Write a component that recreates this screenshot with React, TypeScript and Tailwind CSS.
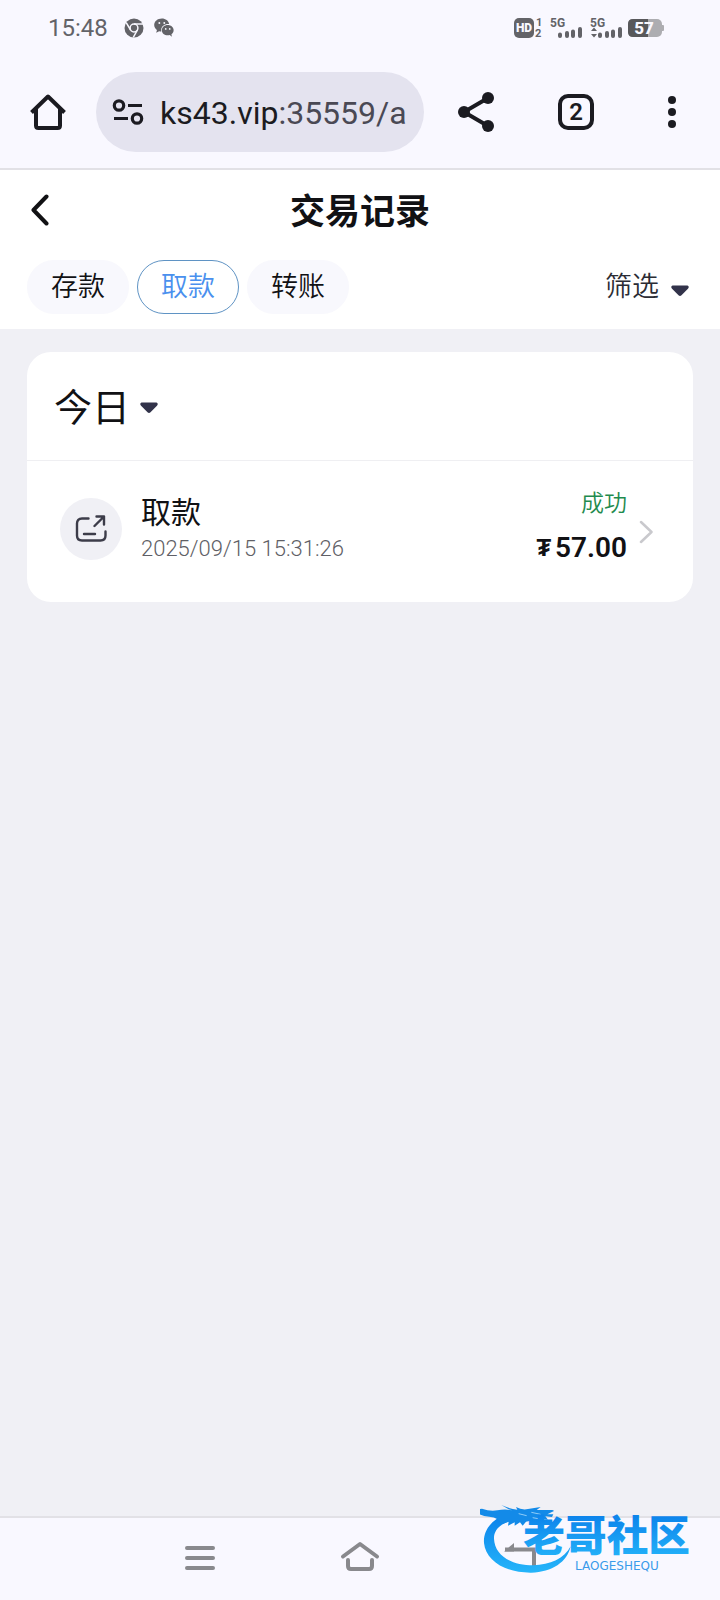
import React from "react";

function StatusBar() {
  return (
    <div className="flex h-14 items-center justify-between pr-14 pl-12 text-[#636368]">
      <div className="flex items-center gap-4">
        <span className="text-2xl leading-none">15:48</span>
        <div className="flex items-center gap-2.5">
          <svg viewBox="0 0 20 20" className="size-5" aria-hidden="true">
            <circle cx="10" cy="10" r="9.5" fill="currentColor" />
            <circle cx="10" cy="10" r="3.9" fill="none" stroke="#f9f8ff" strokeWidth="1.5" />
            <path d="M10 6.1h9M6.6 12 2.2 4.6M13.4 12 9.3 19.4" stroke="#f9f8ff" strokeWidth="1.5" fill="none" />
          </svg>
          <svg viewBox="0 0 21 20" className="h-5 w-5" aria-hidden="true">
            <path d="M8.3 0C3.7 0 .2 3 .2 6.8c0 2.2 1.2 4 2.9 5.3L2.3 15l3.1-1.6c.8.2 1.6.3 2.3.3a6 6 0 0 1-.2-1.6c0-3.7 3.4-6.4 7.5-6.4h.9C15.3 2.4 12.2 0 8.3 0Z" fill="currentColor" />
            <path d="M20.6 12.3c0-3-2.8-5.4-6.2-5.4s-6.2 2.4-6.2 5.4 2.8 5.4 6.2 5.4c.7 0 1.4-.1 2.1-.3l2.3 1.8-.5-2.7c1.4-1 2.3-2.5 2.3-4.2Z" fill="currentColor" />
            <g fill="#f9f8ff">
              <circle cx="5.6" cy="4.8" r="1" />
              <circle cx="10.8" cy="4.8" r="1" />
              <circle cx="12.3" cy="11" r=".9" />
              <circle cx="16.5" cy="11" r=".9" />
            </g>
          </svg>
        </div>
      </div>
      <svg viewBox="0 0 150 22" className="h-[22px] w-[150px]" aria-label="HD, 5G, 57%">
        <rect x="0" y="1" width="20" height="20" rx="5" fill="currentColor" />
        <text x="10" y="15" textAnchor="middle" fontSize="12" fontWeight="900" fill="#f9f8ff">HD</text>
        <g fill="currentColor" fontWeight="700">
          <text x="22" y="9" fontSize="11">1</text>
          <text x="21" y="20" fontSize="11">2</text>
          <text x="36" y="10" fontSize="12">5G</text>
          <text x="76" y="10" fontSize="12">5G</text>
        </g>
        <g stroke="currentColor" strokeWidth="4" strokeLinecap="round">
          <path d="M46 17.5v1.500M53 16v3M59 14.5v4.500M66 12v7" />
          <path d="M86 17.5v1.500M93 16v3M99 14.5v4.500M106 12v7" />
        </g>
        <path d="m77 14 3-3.500 3 3.500zM77 17l3 3.500 3-3.500z" fill="currentColor" />
        <rect x="114" y="2" width="34" height="18" rx="5" fill="#adadb1" />
        <path d="M148 8h1q1 0 1 1v4q0 1-1 1h-1z" fill="#adadb1" />
        <path d="M134 2h-15q-5 0-5 5v8q0 5 5 5h15z" fill="#58585b" />
        <text x="130" y="17" textAnchor="middle" fontSize="17" fontWeight="800" fill="#f9f8ff">57</text>
      </svg>
    </div>
  );
}

function BrowserBar() {
  return (
    <div className="flex h-[114px] items-center border-b-2 border-[#e2e1e6] pl-[30px] text-[#1b1b21]">
      <button type="button" aria-label="主页" className="mr-[30px] shrink-0">
        <svg viewBox="0 0 36 36" className="size-9" fill="none" stroke="currentColor" strokeWidth="4" strokeLinejoin="round">
          <path d="M1.500 18.500 18 2.500l16.500 16M6 15v16.500q0 2.500 2.500 2.500h19q2.500 0 2.500-2.500V15" />
        </svg>
      </button>
      <div className="flex h-20 min-w-0 flex-1 items-center gap-4 rounded-full bg-[#e4e3ef] pr-3 pl-4">
        <svg viewBox="0 0 32 26" className="h-[26px] w-8 shrink-0" fill="none" stroke="currentColor" strokeWidth="3.200" aria-hidden="true">
          <circle cx="7" cy="6.500" r="4.700" />
          <circle cx="25" cy="19.500" r="4.700" />
          <path d="M16 6.500h14M2 19.500h14" />
        </svg>
        <div className="overflow-hidden pt-0.5 text-[32px] leading-10 whitespace-nowrap">
          ks43.vip<span className="text-[#4a4954]">:35559/a</span>
        </div>
      </div>
      <div className="flex shrink-0 items-center pr-11 pl-[34px]">
        <button type="button" aria-label="分享">
          <svg viewBox="0 0 36 40" className="h-10 w-9" fill="currentColor">
            <path d="M30 6 6 20l24 14" fill="none" stroke="currentColor" strokeWidth="4" />
            <circle cx="6" cy="20" r="6" />
            <circle cx="30" cy="6" r="6" />
            <circle cx="30" cy="34" r="6" />
          </svg>
        </button>
        <button type="button" aria-label="标签页" className="ml-16 flex size-9 items-center justify-center rounded-[10px] border-4 border-current text-2xl leading-none font-semibold">
          2
        </button>
        <button type="button" aria-label="更多" className="ml-[74px]">
          <svg viewBox="0 0 8 32" className="h-8 w-2" fill="currentColor">
            <circle cx="4" cy="4" r="4" />
            <circle cx="4" cy="16" r="4" />
            <circle cx="4" cy="28" r="4" />
          </svg>
        </button>
      </div>
    </div>
  );
}

function Caret() {
  return (
    <svg viewBox="0 0 18 12" className="h-3 w-[18px]" fill="#32334a" aria-hidden="true">
      <path d="M1.500.5h15q1.500.3 1.200 2-.3.900-1 1.500l-6.200 6.300q-1.500 1.400-3 0L1.300 4q-.7-.6-1-1.500Q0 .8 1.500.5Z" />
    </svg>
  );
}

const tabs = ["存款", "取款", "转账"];

function PageHeader() {
  const [active, setActive] = React.useState("取款");
  return (
    <header className="bg-white px-[27px] pb-[15px]">
      <div className="grid h-[90px] grid-cols-[1fr_auto_1fr] items-center pb-1">
        <button type="button" aria-label="返回" className="justify-self-start pb-1.5 pl-1">
          <svg viewBox="0 0 18 32" className="h-8 w-[18px]" fill="none" stroke="#111114" strokeWidth="4" strokeLinecap="round" strokeLinejoin="round">
            <path d="M15.500 2.500 2.500 16l13 13.500" />
          </svg>
        </button>
        <h1 className="text-[35px] leading-10 font-bold text-[#111114]">交易记录</h1>
      </div>
      <div className="flex items-center justify-between">
        <div className="flex gap-2">
          {tabs.map((tab) => (
            <button
              key={tab}
              type="button"
              aria-pressed={active === tab}
              onClick={() => setActive(tab)}
              className={
                active === tab
                  ? "h-[54px] w-[102px] rounded-full border border-[#5f93c4] bg-white text-[27px] font-[350] text-[#4a90ee]"
                  : "h-[54px] w-[102px] rounded-full border border-[#f8f8fd] bg-[#f8f8fd] text-[27px] font-[350] text-[#111114]"
              }
            >
              {tab}
            </button>
          ))}
        </div>
        <button type="button" className="flex items-center gap-3 pr-1 text-[27px] font-[350] text-[#2b2c34]">
          <span>筛选</span>
          <span className="pt-2">
            <Caret />
          </span>
        </button>
      </div>
    </header>
  );
}

function Records() {
  return (
    <section className="mx-[27px] mt-[23px] rounded-3xl bg-white text-[#111114]">
      <div className="h-[109px] border-b border-[#efeff2] px-[27px]">
        <button type="button" className="flex h-full items-center gap-2.5 pt-1 text-[38px] leading-none">
          今日
          <Caret />
        </button>
      </div>
      <a href="#record" className="flex h-[141px] items-center pr-10 pl-[33px]">
        <span className="mb-1.5 flex size-[62px] shrink-0 items-center justify-center rounded-full bg-[#f0f0f5]">
          <svg viewBox="0 0 32 28" className="h-7 w-8" fill="none" stroke="#3c3c49" strokeWidth="2.400" strokeLinecap="round" strokeLinejoin="round">
            <path d="M13.500 3.500H7Q2 3.500 2 8.500v12q0 5 5 5h18.500q5 0 5-5v-4M9 19h11M19.500 11l9.500-9.500M21.500 1.500h7.500v8" />
          </svg>
        </span>
        <span className="ml-[19px] flex flex-1 flex-col pb-0.5">
          <span className="text-[30px] leading-9">取款</span>
          <span className="text-[22px] leading-9 font-light text-[#5f5f66]">2025/09/15 15:31:26</span>
        </span>
        <span className="flex flex-col items-end">
          <span className="text-[23px] leading-8 font-[350] text-[#1f8b4e]">成功</span>
          <span className="flex items-center gap-1 text-[28px] leading-[56px] font-semibold">
            <span className="text-2xl">₮</span>57.00
          </span>
        </span>
        <svg viewBox="0 0 14 24" className="ml-3 h-6 w-3.5" fill="none" stroke="#c9c9cd" strokeWidth="2.500" strokeLinecap="round" strokeLinejoin="round" aria-hidden="true">
          <path d="m2 2 10.500 10L2 22" />
        </svg>
      </a>
    </section>
  );
}

function Watermark() {
  return (
    <svg viewBox="60 40 681 219" className="pointer-events-none absolute right-[13px] bottom-6 h-[73px] w-[227px]" aria-label="老哥社区">
      <defs>
        <linearGradient id="brand" x1="0" y1="0" x2="0" y2="1">
          <stop offset="0" stopColor="#0b80ea" />
          <stop offset="1" stopColor="#25b5fa" />
        </linearGradient>
      </defs>
      <path
        d="M140 72C96 88 69 122 72 160c5 54 66 90 142 89 62-1 108-32 118-79-18 36-62 56-112 57-66 0-116-30-118-80-1-26 20-48 62-57Z"
        fill="url(#brand)"
      />
      <path
        d="M66 57q24 9 46 5 24-5 44 0l-10-3-22-13q26 12 48 14l-4-8q18 10 36 6l38-6-12 9h46q4 0 6 3l-20 10h18l-4 8-20-2 8 10-22-2-8 10-16-6-20 4-10 12-8-10-16 10v-10l-20 10 2-12-20 8q-8-20-38-23-30-1-42-20Z"
        fill="#138ae8"
      />
      <path d="m176 72 24 6m14-10 28 6m-24 10 22 4" stroke="#8fcdf9" strokeWidth="3" fill="none" />
      <text x="190" y="184" fontSize="125" fontWeight="900" fill="url(#brand)">
        老哥社区
      </text>
      <text x="345" y="240" fontSize="36" fill="#399bea" className="font-['DejaVu_Sans',sans-serif]">
        LAOGESHEQU
      </text>
    </svg>
  );
}

function SystemNav() {
  return (
    <nav className="relative mt-auto flex h-[84px] items-center justify-center gap-[120px] border-t-2 border-[#e2e1e6] bg-[#f9f8ff] pb-1 text-[#89898d]">
      <button type="button" aria-label="最近任务">
        <svg viewBox="0 0 40 32" className="h-8 w-10" stroke="currentColor" strokeWidth="4" strokeLinecap="round">
          <path d="M7 7h26M7 17h26M7 27h26" />
        </svg>
      </button>
      <button type="button" aria-label="主屏幕">
        <svg viewBox="0 0 40 32" className="h-8 w-10" fill="none" stroke="currentColor" strokeWidth="4" strokeLinecap="round" strokeLinejoin="round">
          <path d="M3 15.500 20 3l17 12.500M8 19v6q0 3 3 3h18q3 0 3-3v-6" />
        </svg>
      </button>
      <button type="button" aria-label="返回上一页">
        <svg viewBox="0 0 40 32" className="h-8 w-10" fill="none" stroke="currentColor" strokeWidth="4">
          <path d="M5 8.500h29v18" />
          <path d="M4 10.500 14 2v8.500z" fill="currentColor" stroke="none" />
        </svg>
      </button>
      <Watermark />
    </nav>
  );
}

export default function App() {
  return (
    <div className="flex min-h-screen flex-col bg-[#f0f0f5] font-[Roboto,'Noto_Sans_CJK_SC',sans-serif]">
      <div className="bg-[#f9f8ff]">
        <StatusBar />
        <BrowserBar />
      </div>
      <PageHeader />
      <main className="pb-8">
        <Records />
      </main>
      <SystemNav />
    </div>
  );
}
